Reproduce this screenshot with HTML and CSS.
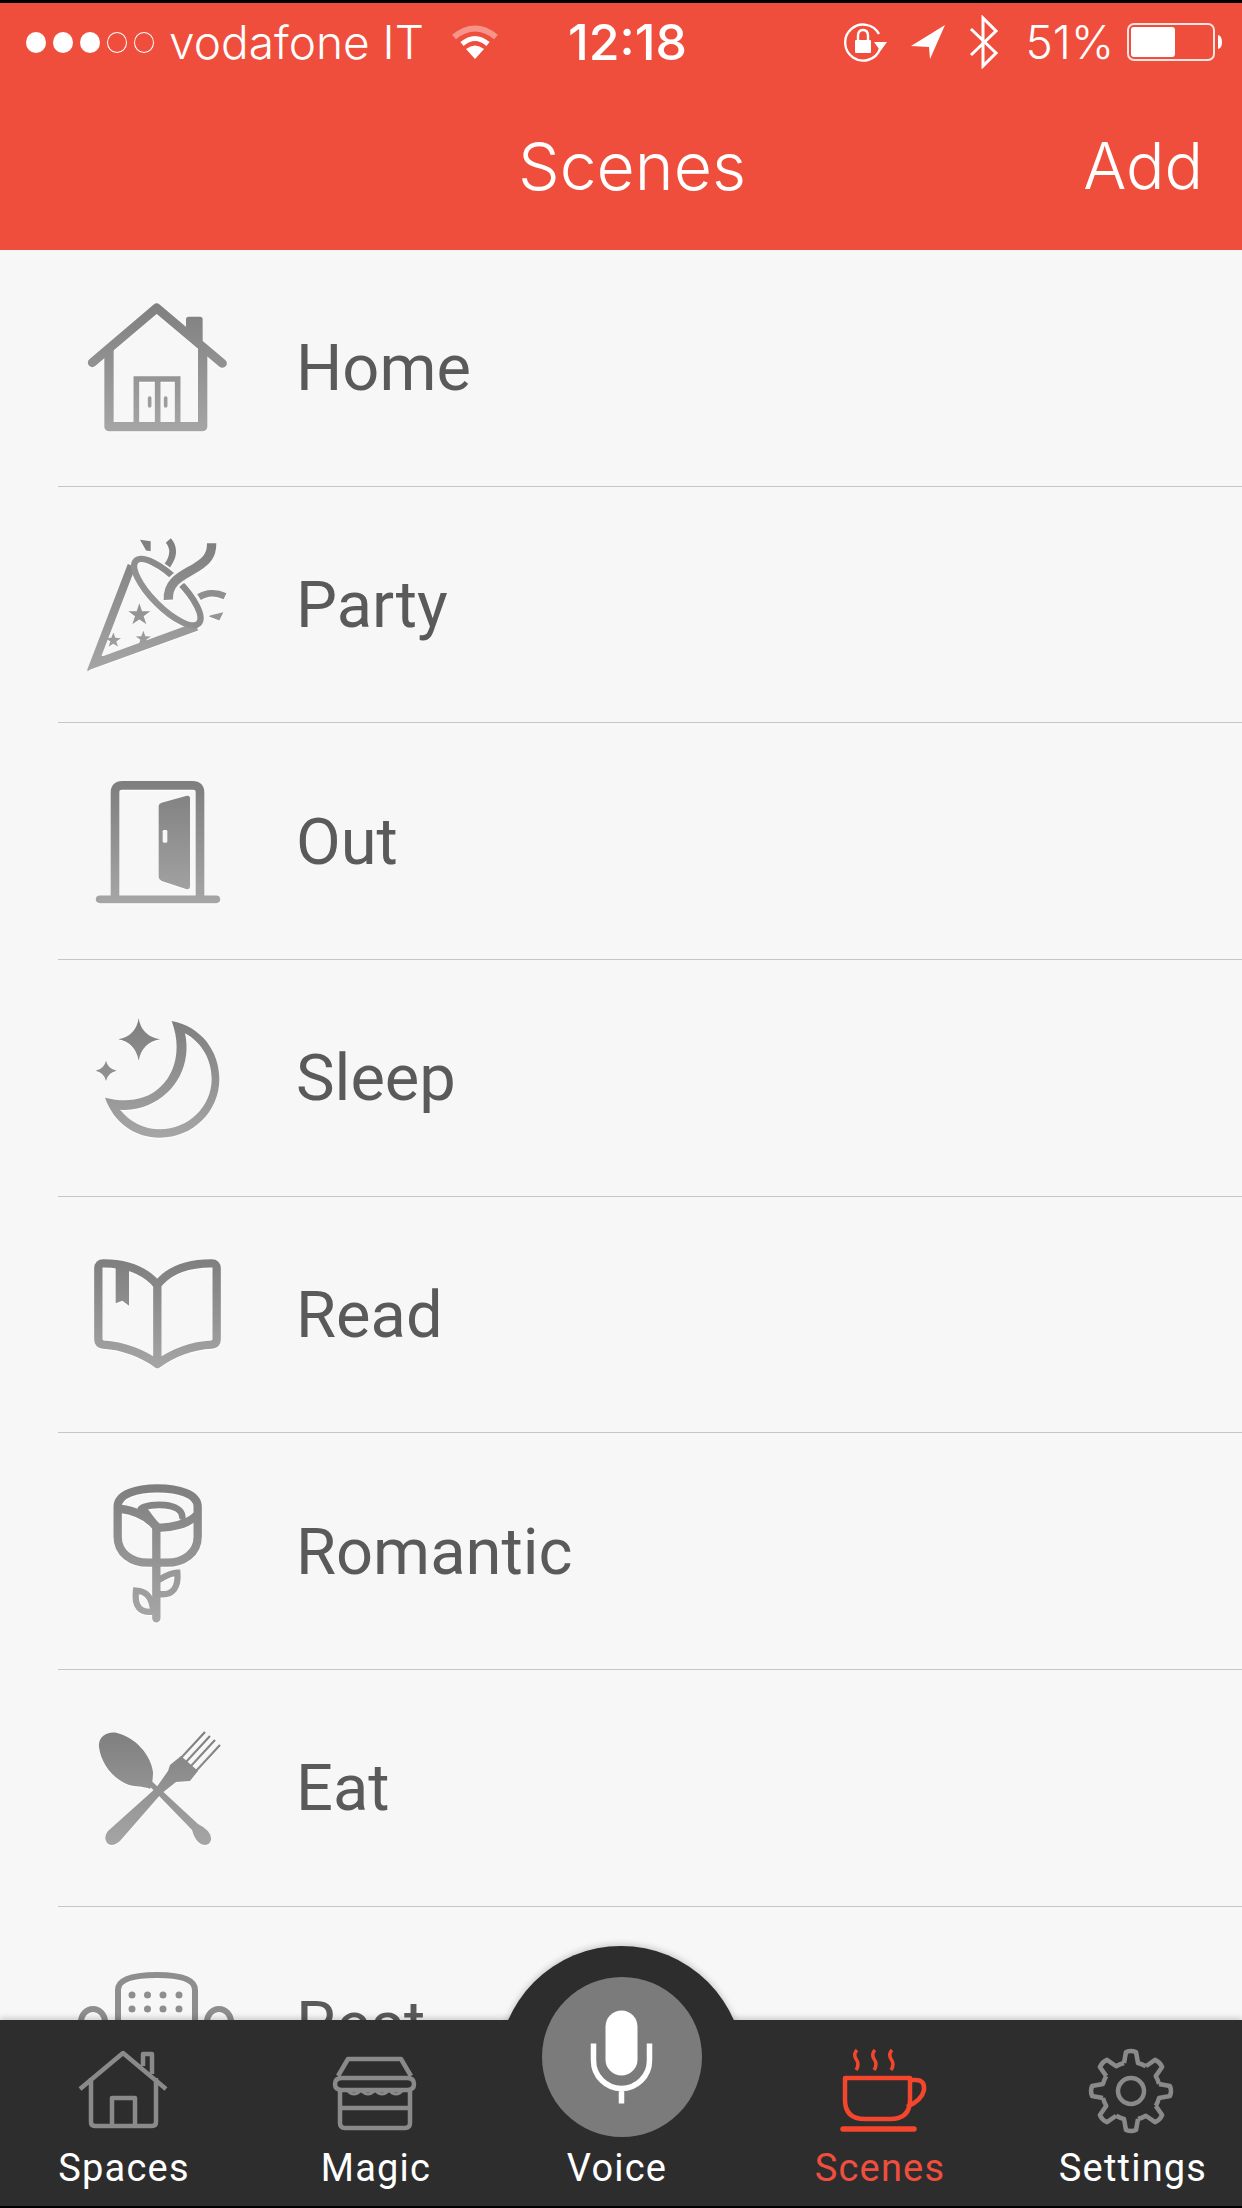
FILE: index.html
```html
<!DOCTYPE html>
<html lang="en">
<head>
<meta charset="utf-8">
<title>Scenes</title>
<link rel="stylesheet" href="styles.css">
</head>
<body>
<div class="screen">
  <header class="top">
    <div class="status">
      <div class="status-left">
        <div class="signal"><i class="dot"></i><i class="dot"></i><i class="dot"></i><i class="dot off"></i><i class="dot off"></i></div>
        <span class="carrier">vodafone IT</span>
        <svg class="wifi" viewBox="0 0 50 36" width="50" height="36">
          <path d="M4 13 Q25 -4 46 13" fill="none" stroke="#fff" stroke-opacity=".4" stroke-width="6"/>
          <path d="M12 20 Q25 9 38 20" fill="none" stroke="#fff" stroke-width="5"/>
          <path d="M25 35 L16 25 Q25 18 34 25 Z" fill="#fff"/>
        </svg>
      </div>
      <div class="clock">12:18</div>
      <div class="status-right">
        <svg viewBox="0 0 46 40" width="46" height="40">
          <path d="M38 12 A18 18 0 1 0 39 27" fill="none" stroke="#fff" stroke-width="2.4"/>
          <path d="M33 20 H46 L39.500 29 Z" fill="#fff"/>
          <path d="M17 19 V14 Q17 8 22 8 Q27 8 27 14 V19" fill="none" stroke="#fff" stroke-width="2.4"/>
          <rect x="14" y="18" width="16" height="13" rx="1" fill="#fff"/>
        </svg>
        <svg viewBox="0 0 36 36" width="36" height="36"><path d="M35 1 L1 22 L19 23 L20 35 Z" fill="#fff"/></svg>
        <svg viewBox="0 0 30 54" width="30" height="54">
          <path d="M2 14 L27 38 L14 51 V3 L27 16 L2 40" fill="none" stroke="#fff" stroke-width="3"/>
        </svg>
        <span class="percent">51%</span>
        <svg viewBox="0 0 96 38" width="96" height="38">
          <rect x="1" y="1" width="86" height="36" rx="6" fill="none" stroke="#fff" stroke-opacity=".85" stroke-width="2"/>
          <rect x="4" y="4" width="44" height="30" rx="3" fill="#fff"/>
          <path d="M91 12 Q95 13 95 19 Q95 25 91 26 Z" fill="#fff"/>
        </svg>
      </div>
    </div>
    <nav class="navbar">
      <span></span>
      <h1 class="nav-title">Scenes</h1>
      <a class="nav-add">Add</a>
    </nav>
  </header>

  <main class="list">
    <div class="row">
      <svg class="scene-icon" viewBox="54 24 480 480">
        <defs><linearGradient id="gHome" gradientUnits="userSpaceOnUse" x1="0" x2="0" y1="60" y2="460"><stop offset="0" stop-color="#7e7e7e"/><stop offset="1" stop-color="#a6a6a6"/></linearGradient></defs>
        <g fill="none" stroke="url(#gHome)" stroke-width="27" stroke-linecap="round" stroke-linejoin="round">
          <path d="M97 248 L290 84 L487 250"/>
          <path d="M147 210 V440 H428 V210" stroke-width="28"/>
          <path d="M229 436 V297 H353 V436 M293 297 V436" stroke-width="17" stroke-linecap="butt" stroke-linejoin="miter"/>
          <path d="M269 354 V378 M317 354 V378" stroke-width="11"/>
        </g>
        <path d="M378 118 Q378 110 386 110 H420 Q428 110 428 118 V190 L378 145 Z" fill="url(#gHome)"/>
      </svg>
      <span class="scene-name">Home</span>
    </div>
    <div class="row">
      <svg class="scene-icon" viewBox="54 733.500 480 480">
        <defs><linearGradient id="gParty" gradientUnits="userSpaceOnUse" x1="0" x2="0" y1="770" y2="1180"><stop offset="0" stop-color="#7e7e7e"/><stop offset="1" stop-color="#a6a6a6"/></linearGradient></defs>
        <g fill="none" stroke="url(#gParty)" stroke-width="20">
          <path d="M215 855 L102 1150 L410 1038" stroke-width="25"/>
          <ellipse cx="322" cy="935" rx="133" ry="46" transform="rotate(45 322 935)" stroke-width="19"/>
          <path d="M325 950 C325 900 370 885 410 860 C440 840 455 825 455 790" stroke="#f7f7f7" stroke-width="42"/>
          <path d="M325 958 C322 900 370 885 410 860 C440 840 455 825 455 788" stroke-width="28"/>
          <path d="M325 780 C346 805 340 830 322 855"/>
          <path d="M417 950 C440 935 470 935 495 947"/>
        </g>
        <g fill="url(#gParty)">
          <polygon points="240,778 272,782 272,812 258,810"/>
          <polygon points="450,1005 490,995 478,1020 447,1008"/>
          <polygon points="238,968 246,992 271,992 251,1007 259,1031 238,1017 217,1031 225,1007 205,992 230,992"/>
          <polygon points="160,1056 166,1072 183,1073 169,1083 174,1099 160,1090 146,1099 151,1083 137,1073 154,1072"/>
          <polygon points="250,1051 256,1067 273,1068 259,1078 264,1094 250,1085 236,1094 241,1078 227,1068 244,1067"/>
          <polygon points="82,1174 110,1120 135,1130"/>
        </g>
      </svg>
      <span class="scene-name">Party</span>
    </div>
    <div class="row">
      <svg class="scene-icon" viewBox="54 3 480 480">
        <defs><linearGradient id="gOut" gradientUnits="userSpaceOnUse" x1="0" x2="0" y1="60" y2="430"><stop offset="0" stop-color="#7e7e7e"/><stop offset="1" stop-color="#a6a6a6"/></linearGradient></defs>
        <path d="M165 413 V95 Q165 73 187 73 H398 Q420 73 420 95 V413" fill="none" stroke="url(#gOut)" stroke-width="26"/>
        <path d="M119 415 H469" fill="none" stroke="url(#gOut)" stroke-width="23" stroke-linecap="round"/>
        <path d="M296 135 Q296 128 305 125 L378 105 Q390 102 390 112 V375 Q390 387 378 384 L305 360 Q296 356 296 348 Z" fill="url(#gOut)"/>
        <rect class="knob" x="308" y="207" width="14" height="38" rx="4"/>
      </svg>
      <span class="scene-name">Out</span>
    </div>
    <div class="row">
      <svg class="scene-icon" viewBox="54 714 480 480">
        <defs><linearGradient id="gSleep" gradientUnits="userSpaceOnUse" x1="0" x2="0" y1="775" y2="1135"><stop offset="0" stop-color="#7e7e7e"/><stop offset="1" stop-color="#a6a6a6"/></linearGradient></defs>
        <g fill="url(#gSleep)">
          <path fill-rule="evenodd" d="M335 783 C425 800 478 875 478 957 C478 1055 398 1133 300 1133 C222 1133 160 1085 135 1013 C175 1023 215 1024 250 1012 C330 985 375 890 335 783 Z M375 820 C430 850 455 905 455 957 C455 1040 385 1108 300 1108 C250 1108 210 1085 180 1049 C210 1052 240 1046 265 1035 C350 1000 395 910 375 820 Z"/>
          <path d="M236 775 Q244 828 300 838 Q246 848 236 902 Q226 848 175 838 Q228 828 236 775 Z"/>
          <path d="M138 902 Q143 926 170 932 Q143 938 138 963 Q133 938 107 932 Q133 926 138 902 Z"/>
        </g>
      </svg>
      <span class="scene-name">Sleep</span>
    </div>
    <div class="row">
      <svg class="scene-icon" viewBox="54 -15 480 480">
        <defs><linearGradient id="gRead" gradientUnits="userSpaceOnUse" x1="0" x2="0" y1="55" y2="390"><stop offset="0" stop-color="#7e7e7e"/><stop offset="1" stop-color="#a6a6a6"/></linearGradient></defs>
        <path d="M292 372 C250 342 190 317 130 314 Q115 312 115 298 V85 Q115 70 130 70 C190 70 250 85 292 135 C330 85 395 70 455 70 Q470 70 470 85 V298 Q470 312 455 314 C395 317 335 342 292 372 Z M292 135 V372" fill="none" stroke="url(#gRead)" stroke-width="25" stroke-linejoin="round"/>
        <polygon points="167,75 207,75 207,197 187,182 167,190" fill="url(#gRead)"/>
      </svg>
      <span class="scene-name">Read</span>
    </div>
    <div class="row">
      <svg class="scene-icon" viewBox="54 696 480 480" >
        <defs><linearGradient id="gRose" gradientUnits="userSpaceOnUse" x1="0" x2="0" y1="730" y2="1140"><stop offset="0" stop-color="#7e7e7e"/><stop offset="1" stop-color="#a6a6a6"/></linearGradient></defs>
        <g fill="none" stroke="url(#gRose)" stroke-width="25" stroke-linecap="round">
          <path d="M173 800 C173 762 230 745 293 745 C355 745 413 762 413 800 V890 C413 940 370 968 320 968 H265 C215 968 173 940 173 890 Z"/>
          <path d="M178 806 C225 812 265 830 289 862 V1135" />
          <path d="M289 862 C330 866 385 852 410 826" />
          <path d="M243 806 C270 788 365 788 367 830" stroke-width="20"/>
          <path d="M255 812 C268 830 278 845 289 855" stroke-width="20"/>
          <path d="M300 1018 C325 1003 340 998 352 998 C356 1040 340 1068 298 1062" stroke-width="19"/>
          <path d="M228 1052 C255 1054 275 1065 280 1115 C240 1120 222 1100 228 1052 Z" stroke-width="19"/>
        </g>
      </svg>
      <span class="scene-name">Romantic</span>
    </div>
    <div class="row">
      <svg class="scene-icon" viewBox="78 1709 160 160">
        <defs><linearGradient id="gEat" gradientUnits="userSpaceOnUse" x1="0" x2="0" y1="1730" y2="1848"><stop offset="0" stop-color="#7e7e7e"/><stop offset="1" stop-color="#a6a6a6"/></linearGradient></defs>
        <g fill="url(#gEat)">
          <path d="M99 1748 C98 1738 107 1732 117 1734 C135 1738 151 1756 153 1773 C153 1780 152 1784 152 1786 L150 1790 C146 1788 142 1788 134 1787 C116 1784 101 1766 99 1748 Z"/>
          <path d="M151.800 1782.200 L198 1825 Q212 1832 211 1841 Q209 1848 201 1845 Q195 1842 192 1831 L148.200 1785.800 Z"/>
          <path d="M156 1789 L168 1772 L170 1766 L181 1757 L198 1772 L190 1782 L176 1783 L161 1795 L120 1842 Q112 1849 107 1844 Q103 1838 108 1832 Z"/>
        </g>
        <path d="M181 1759 L205 1733 M186 1763 L210 1737 M191 1767 L215 1741 M196 1772 L220 1746" fill="none" stroke="url(#gEat)" stroke-width="2.200"/>
      </svg>
      <span class="scene-name">Eat</span>
    </div>
    <div class="row">
      <svg class="scene-icon" viewBox="78 1945 160 160">
        <g fill="none" stroke="#8e8e8e" stroke-width="6">
          <path d="M118 2035 V1990 Q118 1975 157 1975 Q195 1975 195 1990 V2035"/>
          <ellipse cx="93" cy="2022" rx="12" ry="13"/>
          <ellipse cx="219" cy="2022" rx="12" ry="13"/>
        </g>
        <g fill="#8e8e8e">
          <circle cx="132" cy="1995" r="3.500"/><circle cx="147.500" cy="1995" r="3.500"/><circle cx="163" cy="1995" r="3.500"/><circle cx="179" cy="1995" r="3.500"/>
          <circle cx="132" cy="2009" r="3.500"/><circle cx="147.500" cy="2009" r="3.500"/><circle cx="163" cy="2009" r="3.500"/><circle cx="179" cy="2009" r="3.500"/>
        </g>
      </svg>
      <span class="scene-name">Rest</span>
    </div>
  </main>

  <footer class="tabbar">
    <div class="voice-disc"></div>
    <div class="mic-disc">
      <svg viewBox="541.500 1976.500 160 160" width="160" height="160">
        <rect x="605" y="2010" width="32" height="65" rx="16" fill="#fff"/>
        <path d="M593 2043 V2060 A28 28 0 0 0 649 2060 V2043 M621 2088 V2103" fill="none" stroke="#fff" stroke-width="5.500"/>
      </svg>
    </div>
    <div class="tabs">
      <div class="tab">
        <svg class="tab-icon" viewBox="74 2047 100 90">
          <path d="M80 2089 L123 2053 L166 2089 M91 2078 V2122 Q91 2126 95 2126 H152 Q156 2126 156 2122 V2078 M112 2126 V2098 H135 V2126 M143 2066 V2054 H152 V2074"/>
        </svg>
        <span class="tab-label">Spaces</span>
      </div>
      <div class="tab">
        <svg class="tab-icon" viewBox="326 2047 100 90">
          <path d="M338 2076 L348 2059 H401 L411 2076 M342 2078 H407 Q414 2078 414 2084 Q414 2090 407 2090 H342 Q335 2090 335 2084 Q335 2078 342 2078 Z M340 2090 V2123 Q340 2128 345 2128 H405 Q410 2128 410 2123 V2090 M340 2108 H410"/>
          <path d="M347 2090 Q354 2098 361 2090 Q368 2098 375 2090 Q382 2098 389 2090 Q396 2098 403 2090" stroke-width="3"/>
        </svg>
        <span class="tab-label">Magic</span>
      </div>
      <div class="tab">
        <div class="tab-icon-gap"></div>
        <span class="tab-label">Voice</span>
      </div>
      <div class="tab active">
        <svg class="tab-icon" viewBox="830 2047 100 90">
          <path d="M857 2050 Q853 2054 856 2059 Q860 2064 856 2070 M875 2050 Q871 2054 874 2059 Q878 2064 874 2070 M892 2050 Q888 2054 891 2059 Q895 2064 891 2070" stroke-width="3.500"/>
          <path d="M845 2078 H910 V2100 Q910 2119 890 2119 H865 Q845 2119 845 2100 Z M910 2080 H916 Q925 2080 924 2090 Q922 2100 907 2107"/>
          <path d="M843 2129 H914" stroke-linecap="round" stroke-width="5.500"/>
        </svg>
        <span class="tab-label">Scenes</span>
      </div>
      <div class="tab">
        <svg class="tab-icon" viewBox="1083 2047 100 90">
          <defs><path id="gear-tooth" d="M-7 -28 L-5 -39 Q0 -41 5 -39 L7 -28 Q11 -27 14.850 -24.750"/></defs>
          <g transform="translate(1131 2091)">
            <use href="#gear-tooth"/>
            <use href="#gear-tooth" transform="rotate(45)"/>
            <use href="#gear-tooth" transform="rotate(90)"/>
            <use href="#gear-tooth" transform="rotate(135)"/>
            <use href="#gear-tooth" transform="rotate(180)"/>
            <use href="#gear-tooth" transform="rotate(225)"/>
            <use href="#gear-tooth" transform="rotate(270)"/>
            <use href="#gear-tooth" transform="rotate(315)"/>
            <circle r="13"/>
          </g>
        </svg>
        <span class="tab-label">Settings</span>
      </div>
    </div>
  </footer>
</div>
</body>
</html>
```

FILE: styles.css
```css
* { box-sizing: border-box; }
html, body { margin: 0; padding: 0; }
body { background: #f7f7f7; }

.screen {
  position: relative;
  width: 1242px;
  height: 2208px;
  overflow: hidden;
  display: flex;
  flex-direction: column;
  background: #f7f7f7;
}

.top {
  height: 250px;
  flex: none;
  background: #f04e3c;
  border-top: 3px solid #000;
  color: #fff;
  font-family: Inter, "Liberation Sans", sans-serif;
}

.status {
  display: grid;
  grid-template-columns: 1fr auto 1fr;
  align-items: center;
  height: 78px;
  padding: 0 19px 0 26px;
}
.status-left, .status-right { display: flex; align-items: center; }
.status-right { justify-content: flex-end; }
.status-right svg:nth-child(1) { margin-right: 23px; }
.status-right svg:nth-child(2) { margin-right: 23px; }
.status-right svg:nth-child(3) { margin-right: 27px; }

.signal { display: flex; gap: 7px; margin-right: 15px; }
.dot {
  display: block;
  width: 20px;
  height: 21px;
  border-radius: 50%;
  background: #fff;
}
.dot.off { background: none; border: 1.5px solid #fff; }
.carrier { font-size: 46px; font-weight: 300; line-height: 50px; }
.wifi { margin-left: 26px; }
.clock { font-size: 50px; font-weight: 500; line-height: 54px; margin-left: 6px; }
.percent { font-size: 46px; font-weight: 300; line-height: 50px; margin-right: 13px; }

.navbar {
  display: grid;
  grid-template-columns: 1fr auto 1fr;
  align-items: center;
  height: 169px;
  padding: 0 39px 0 61px;
}
.nav-title { grid-column: 2; margin: 0; font-size: 66px; font-weight: 300; line-height: 72px; }
.nav-add { justify-self: end; font-size: 64px; font-weight: 300; line-height: 72px; }

.list { flex: 1; overflow: hidden; }
.row {
  display: flex;
  align-items: center;
  gap: 58px;
  height: 236.7px;
  padding-left: 78px;
  position: relative;
}
.row::after {
  content: "";
  position: absolute;
  left: 58px;
  right: 0;
  bottom: 0;
  height: 1px;
  background: #c6c6c6;
}
.scene-icon {
  width: 160px;
  height: 160px;
  flex: none;
  filter: drop-shadow(0 1px 0 #fff);
}
.knob { fill: #f7f7f7; }
.scene-name {
  font-family: Roboto, "Liberation Sans", sans-serif;
  font-size: 65px;
  font-weight: 400;
  color: #5a5a5a;
}

.tabbar {
  position: absolute;
  left: 0;
  right: 0;
  bottom: 0;
  height: 188px;
  background: #2d2d2d;
  border-bottom: 2px solid #000;
  box-shadow: 0 -2px 6px rgba(0, 0, 0, .18);
}
.voice-disc {
  position: absolute;
  left: 498px;
  top: -74px;
  width: 246px;
  height: 246px;
  border-radius: 50%;
  background: #2d2d2d;
  box-shadow: 0 -2px 6px rgba(0, 0, 0, .18);
  clip-path: inset(-12px -12px 172px -12px);
}
.mic-disc {
  position: absolute;
  left: 541.5px;
  top: -43.5px;
  width: 160px;
  height: 160px;
  border-radius: 50%;
  background: #7b7b7b;
}
.mic-disc svg { display: block; }

.tabs {
  position: relative;
  display: grid;
  grid-template-columns: 248px 256px 226px 300px 206px;
  height: 186px;
  padding-top: 27px;
}
.tab { display: flex; flex-direction: column; align-items: center; color: #fff; }
.tab-icon, .tab-icon-gap { width: 100px; height: 90px; flex: none; }
.tab-icon { fill: none; stroke: #8a8a8a; stroke-width: 4.5; stroke-linejoin: round; }
.tab.active .tab-icon { stroke: #f4452d; }
.tab-label {
  font-family: Roboto, "Liberation Sans", sans-serif;
  font-size: 38px;
  font-weight: 400;
  letter-spacing: 1.2px;
  line-height: 44px;
  margin-top: 9px;
}
.tab.active .tab-label { color: #f04e3e; }
```
